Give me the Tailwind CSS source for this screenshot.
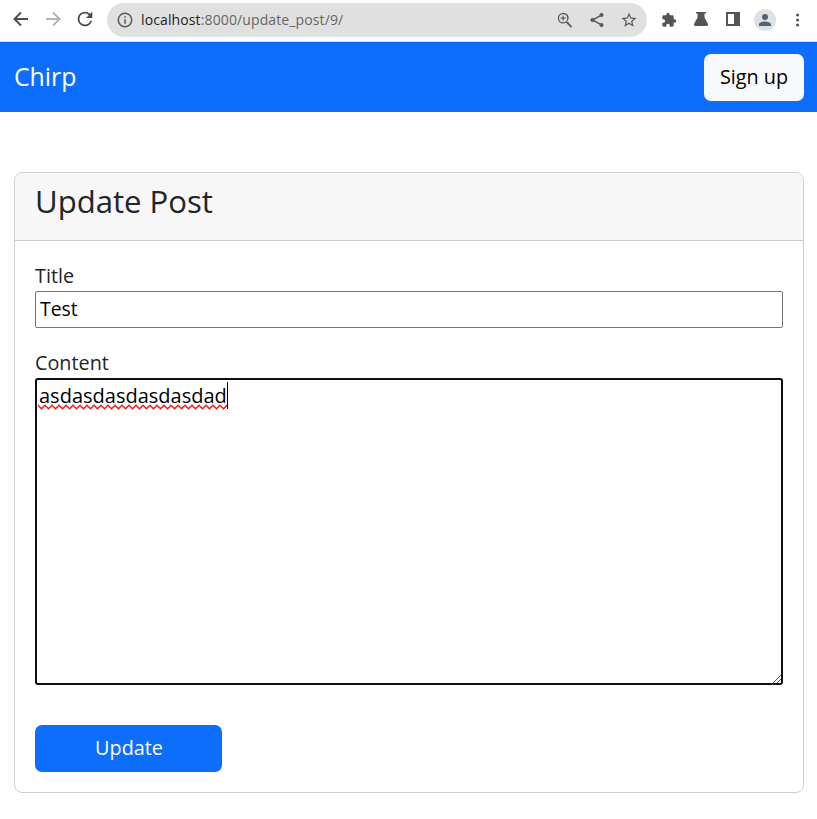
<!DOCTYPE html>
<html lang="en">
<head>
<meta charset="utf-8">
<title>Update Post</title>
<script src="https://cdn.jsdelivr.net/npm/@tailwindcss/browser@4"></script>
</head>
<body class="h-[819px] w-[817px] overflow-hidden bg-white font-['Open_Sans','Noto_Sans',sans-serif] text-[20px] leading-[30px] text-[#212529]">
  <div class="flex h-[42px] items-start border-b border-[#d6dae0] pt-[3px] text-[#5a5a5a]">
    <div class="flex h-[34px] w-[107px] items-center gap-2 pl-[9px]">
      <svg class="size-6 -mt-[2px]" viewBox="0 0 24 24" fill="none" stroke="#4d4d4d" stroke-width="2"><path d="M19 12H6M12 5.500L5.500 12l6.500 6.500"/></svg>
      <svg class="size-6 -mt-[2px]" viewBox="0 0 24 24" fill="none" stroke="#b4b4b4" stroke-width="2"><path d="M5 12h13M12 5.500l6.500 6.500-6.500 6.500"/></svg>
      <svg class="ml-px size-[22px] -mt-[2px]" viewBox="0 0 24 24" fill="#4d4d4d"><path d="M17.650 6.350A7.960 7.960 0 0 0 12 4a8 8 0 1 0 7.730 10h-2.080A6 6 0 1 1 12 6c1.660 0 3.140.690 4.220 1.780L13 11h7V4z"/></svg>
    </div>
    <div class="flex h-[34px] w-[540px] items-center rounded-full bg-[#e0e0e0] pr-[9px] pl-[9px]">
      <svg class="size-[18px]" viewBox="0 0 24 24" fill="#5a5a5a"><path d="M11 7h2v2h-2zm0 4h2v6h-2zm1-9a10 10 0 1 0 0 20 10 10 0 0 0 0-20zm0 18a8 8 0 1 1 0-16 8 8 0 0 1 0 16z"/></svg>
      <div class="ml-[7px] flex-1 text-[14px] leading-5 tracking-[0.120px] text-[#666]"><span class="text-[#222]">localhost</span>:8000/update_post/9/</div>
      <div class="flex items-center gap-[14px]">
        <svg class="size-[18px]" viewBox="0 0 24 24" fill="#5a5a5a"><path d="M15.500 14h-.790l-.280-.270A6.470 6.470 0 0 0 17 9.500 7.300 7.300 0 1 0 9.500 16.800c1.610 0 3.090-.590 4.230-1.570l.270.280v.790l6 5.990L21.500 20.800zm-6 1a5.400 5.400 0 1 1 0-10.800 5.400 5.400 0 0 1 0 10.800zM10.300 6.200H8.700v2.500h-2.500v1.600h2.500v2.500h1.600v-2.500h2.500V8.700h-2.500z"/></svg>
        <svg class="size-[18px]" viewBox="0 0 24 24" fill="#5a5a5a" stroke="#5a5a5a"><path d="M18 5.500L6 12l12 6.500" fill="none" stroke-width="2"/><circle cx="18" cy="5.300" r="2.300"/><circle cx="6" cy="12" r="2.300"/><circle cx="18" cy="18.700" r="2.300"/></svg>
        <svg class="size-[18px]" viewBox="0 0 24 24" fill="#5a5a5a"><path d="M22 9.240l-7.190-.620L12 2 9.190 8.630 2 9.240l5.460 4.730L5.820 21 12 17.270 18.180 21l-1.630-7.030zM12 15.400l-3.760 2.270 1-4.280-3.320-2.880 4.380-.380L12 6.100l1.710 4.040 4.380.380-3.320 2.880 1 4.280z"/></svg>
      </div>
    </div>
    <div class="flex h-[34px] flex-1 items-center pl-[14px]">
      <svg class="size-4" viewBox="0 0 24 24" fill="#555"><path d="M20.500 11H19V7a2 2 0 0 0-2-2h-4V3.500a2.500 2.500 0 0 0-5 0V5H4a2 2 0 0 0-2 2v3.800h1.500a2.700 2.700 0 0 1 0 5.400H2V20a2 2 0 0 0 2 2h3.800v-1.500a2.700 2.700 0 0 1 5.400 0V22H17a2 2 0 0 0 2-2v-4h1.500a2.500 2.500 0 0 0 0-5z"/></svg>
      <svg class="ml-4 h-4 w-4 -mt-[2px]" viewBox="0 0 16 16" fill="#555"><path d="M3 1h10v1.500h-1.500V6.500L15 13q.500 2-1.500 2h-11Q.500 15 1 13l3.500-6.500V2.500H3z"/></svg>
      <svg class="ml-4 size-4 -mt-[2px]" viewBox="0 0 16 16" fill="#555"><path fill-rule="evenodd" d="M1 1h14v14H1zM3 3v10h6V3z"/></svg>
      <div class="ml-[13px] flex size-[22px] items-center justify-center rounded-full bg-[#dee1e6]">
        <svg class="size-[18px]" viewBox="0 0 24 24" fill="#566173"><circle cx="12" cy="8" r="4"/><path d="M12 14c-2.670 0-8 1.340-8 4v2h16v-2c0-2.660-5.330-4-8-4z"/></svg>
      </div>
      <svg class="ml-[12.500px] size-[18px] -mt-px" viewBox="0 0 18 18" fill="#5a5a5a"><circle cx="8.600" cy="4" r="1.600"/><circle cx="8.600" cy="9" r="1.600"/><circle cx="8.600" cy="14" r="1.600"/></svg>
    </div>
  </div>
  <nav class="flex h-[70px] items-center justify-between bg-[#0d6efd] pr-[13px] pl-[14px]">
    <a class="pb-[2px] text-[24.800px] text-white">Chirp</a>
    <button class="h-[47px] w-[100px] rounded-[7px] bg-[#f8f9fa] text-[19.800px] text-black">Sign up</button>
  </nav>
  <main class="mt-[60px] mr-[13px] ml-[14px] h-[621px] rounded-[8px] border border-[#d0d0d0]">
    <div class="h-[68px] rounded-t-[7px] border-b border-[#cacaca] bg-[#f7f7f7] pt-[9px] pl-5">
      <h1 class="text-[31.100px] leading-[38px]">Update Post</h1>
    </div>
    <form class="flex flex-col items-start px-5 pt-5">
      <label class="text-[19.800px] leading-[30px]">Title</label>
      <div class="h-[37px] w-full rounded-[2px] border border-[#767676] px-1 py-[2px] text-[19.400px] text-black">Test</div>
      <label class="mt-5 text-[19.800px] leading-[30px]">Content</label>
      <div class="relative h-[307px] w-full rounded-[3px] border-2 border-[#101010] px-[2px] py-[1px] text-black">
        <div class="flex items-center"><span>asdasdasdasdasdad</span><span class="-mt-px h-[27px] w-px bg-black"></span></div>
        <svg class="absolute top-[23px] left-px h-[7px] w-[189px]" viewBox="0 0 189 7"><defs><pattern id="squiggle" width="7" height="7" patternUnits="userSpaceOnUse"><path d="M-1.750 4L0 2.300l3.500 3.400L7 2.300l1.750 1.700" fill="none" stroke="#f11" stroke-width="1.400"/></pattern></defs><rect width="189" height="7" fill="url(#squiggle)"/></svg>
        <svg class="absolute right-0 bottom-0 size-[9px]" viewBox="0 0 9 9" stroke="#555" stroke-width="1"><path d="M1 9l8-8M5 9l4-4"/></svg>
      </div>
      <button type="button" class="mt-10 h-[47px] w-[187px] rounded-[7px] bg-[#0d6efd] pb-[2px] pl-px text-[19.800px] text-white">Update</button>
    </form>
  </main>
</body>
</html>
